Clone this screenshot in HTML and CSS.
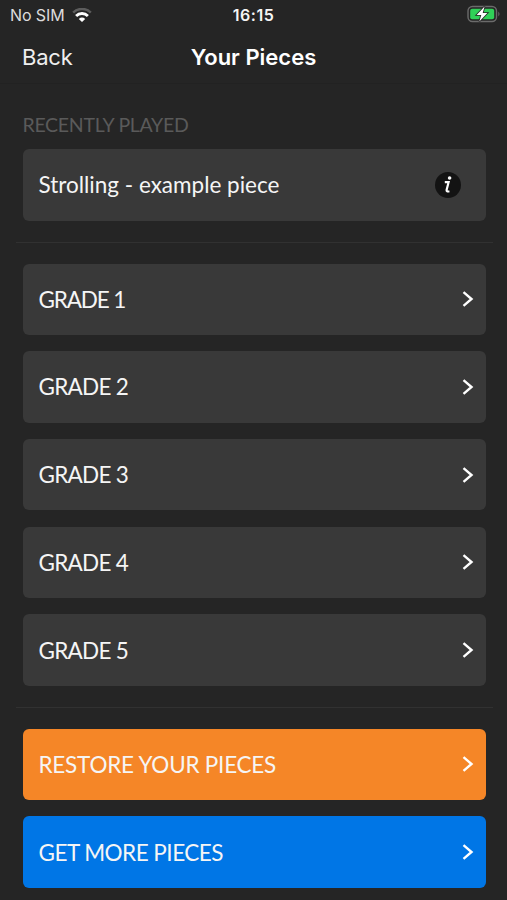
FILE: index.html
```html
<!DOCTYPE html>
<html lang="en">
<head>
  <meta charset="UTF-8" />
  <meta name="viewport" content="width=device-width, initial-scale=1.0"/>
  <title>Your Pieces</title>
  <link rel="stylesheet" href="styles.css">
</head>

<body>

  <!-- Phone status bar -->
  <div class="status-bar">
    <div class="carrier">
      <span class="carrier-name">No SIM</span>
      <svg class="wifi" viewBox="0 0 20 14" width="20" height="14">
        <path d="M1.2 4.6a12.6 12.6 0 0 1 17.6 0" fill="none" stroke="#5c5c5c" stroke-width="2.6"/>
        <path d="M4.1 8a8.2 8.2 0 0 1 11.8 0" fill="none" stroke="#fff" stroke-width="2.8"/>
        <path d="M10 14L6.8 10.9a4.7 4.7 0 0 1 6.4 0z" fill="#fff"/>
      </svg>
    </div>
    <div class="clock">16:15</div>
    <svg class="battery" viewBox="0 0 34 18" width="34" height="18">
      <rect x="1" y="1.5" width="28.5" height="15" rx="4.5" fill="none" stroke="#6b6b6b" stroke-width="1.4"/>
      <path d="M31.3 6.5q2.4 2.5 0 5z" fill="#6b6b6b"/>
      <rect x="3.2" y="3.7" width="24" height="10.6" rx="2" fill="#30d158"/>
      <path d="M17.6 1.5L9.6 10h4.7l-2 6.5L20.4 8h-4.7z" fill="#fff" stroke="#252525" stroke-width="1.6" paint-order="stroke"/>
    </svg>
  </div>

  <!-- Navigation bar -->
  <nav>
    <a class="back">Back</a>
    <h1>Your Pieces</h1>
  </nav>

  <main>
    <h2>RECENTLY PLAYED</h2>
    <div class="row">
      <span class="piece-name">Strolling - example piece</span>
      <svg class="info" viewBox="0 0 26 26" width="26" height="26">
        <circle cx="13" cy="13" r="13" fill="#131313"/>
        <circle cx="14.6" cy="6" r="1.8" fill="#fff"/>
        <path d="M9.8 10.2h3.8l-2 7.8q-.4 2 2.8 1.3" fill="none" stroke="#fff" stroke-width="2.2"/>
      </svg>
    </div>

    <hr>

    <div class="list">
      <div class="row"><span class="grade grade-one">GRADE 1</span><svg class="chevron" viewBox="0 0 12 16"><path d="M1.5 1.2L9.5 8l-8 6.8"/></svg></div>
      <div class="row"><span class="grade">GRADE 2</span><svg class="chevron" viewBox="0 0 12 16"><path d="M1.5 1.2L9.5 8l-8 6.8"/></svg></div>
      <div class="row"><span class="grade">GRADE 3</span><svg class="chevron" viewBox="0 0 12 16"><path d="M1.5 1.2L9.5 8l-8 6.8"/></svg></div>
      <div class="row"><span class="grade">GRADE 4</span><svg class="chevron" viewBox="0 0 12 16"><path d="M1.5 1.2L9.5 8l-8 6.8"/></svg></div>
      <div class="row"><span class="grade">GRADE 5</span><svg class="chevron" viewBox="0 0 12 16"><path d="M1.5 1.2L9.5 8l-8 6.8"/></svg></div>
    </div>

    <hr>

    <div class="list">
      <div class="row restore"><span class="restore-label">RESTORE YOUR PIECES</span><svg class="chevron" viewBox="0 0 12 16"><path d="M1.5 1.2L9.5 8l-8 6.8"/></svg></div>
      <div class="row more"><span class="more-label">GET MORE PIECES</span><svg class="chevron" viewBox="0 0 12 16"><path d="M1.5 1.2L9.5 8l-8 6.8"/></svg></div>
    </div>
  </main>

</body>
</html>
```
FILE: styles.css
```css
* { box-sizing: border-box; }
body {
  margin: 0;
  height: 900px;
  overflow: hidden;
  font-family: Lato, sans-serif;
  background: #252525;
  color: #f5f5f5;
}

/* Status bar */
.status-bar {
  display: grid;
  grid-template-columns: 1fr auto 1fr;
  align-items: center;
  height: 30px;
  padding: 0 7px 0 10px;
  font-family: Inter, sans-serif;
  font-size: 16px;
}

.carrier {
  display: flex;
  align-items: center;
  gap: 7px;
}

.carrier-name {
  color: #dcdcdc;
  letter-spacing: -0.1px;
}

.clock {
  font-weight: 600;
  letter-spacing: 0.5px;
  margin-right: 3px;
}

.battery {
  justify-self: end;
  margin-top: -2px;
  margin-right: -1px;
}

/* Navigation bar */
nav {
  display: grid;
  grid-template-columns: 1fr auto 1fr;
  align-items: center;
  height: 54px;
  padding: 1px 22px 0;
  border-bottom: 1px solid #222;
  font-family: Inter, sans-serif;
}

.back {
  font-size: 22px;
  letter-spacing: -0.2px;
  color: #efefef;
}

h1 {
  margin: 0;
  font-size: 22px;
  font-weight: 600;
  color: #fff;
}

main {
  padding: 26.5px 21.5px 0 22.5px;
}

h2 {
  margin: 0 0 11.7px;
  font-size: 19.5px;
  line-height: 27px;
  font-weight: 400;
  letter-spacing: -0.28px;
  color: #5a5a5a;
}

/* Rounded list rows */
.row {
  display: flex;
  align-items: center;
  justify-content: space-between;
  height: 71.4px;
  padding: 0 12px 0 16px;
  border-radius: 6px;
  background: #393939;
  font-size: 22.5px;
  white-space: nowrap;
}

.list {
  display: grid;
  gap: 16.3px;
}

/* Label tracking */
.grade { letter-spacing: -0.75px; }
.grade-one { letter-spacing: -1.15px; }
.restore-label { letter-spacing: -0.24px; }
.more-label { letter-spacing: -0.52px; }

.info {
  margin-right: 13px;
}

.chevron {
  width: 12px;
  height: 16px;
  fill: none;
  stroke: #fff;
  stroke-width: 2.4;
}

hr {
  height: 1px;
  margin: 21px -7px;
  border: 0;
  background: #313131;
}

.restore { background: #f58627; }
.more { background: #0076e6; }
```
